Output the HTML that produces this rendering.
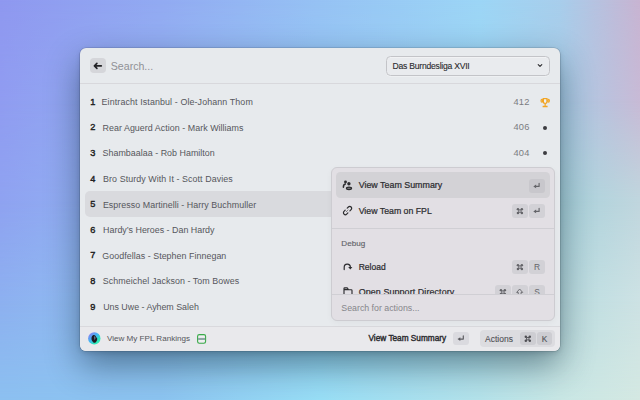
<!DOCTYPE html><html><head><meta charset="utf-8"><style>
*{margin:0;padding:0}
html,body{width:640px;height:400px;overflow:hidden}
body{position:relative;font-family:"Liberation Sans",sans-serif}
.bg0{position:absolute;left:0;top:0;width:640px;height:400px;background:linear-gradient(90deg,rgb(143, 152, 240) 0.00%,rgb(146, 170, 242) 25.00%,rgb(150, 194, 244) 50.00%,rgb(156, 214, 246) 75.00%,rgb(168, 206, 236) 87.50%,rgb(200, 180, 210) 100.00%);}
.bg1{position:absolute;left:0;top:0;width:640px;height:400px;background:linear-gradient(90deg,rgb(144, 156, 241) 0.00%,rgb(147, 178, 242) 25.00%,rgb(150, 200, 245) 50.00%,rgb(158, 212, 242) 75.00%,rgb(168, 204, 230) 87.50%,rgb(200, 186, 214) 100.00%);-webkit-mask-image:linear-gradient(180deg,transparent 0.0%,#000 25.0%,#000 100%);mask-image:linear-gradient(180deg,transparent 0.0%,#000 25.0%,#000 100%);}
.bg2{position:absolute;left:0;top:0;width:640px;height:400px;background:linear-gradient(90deg,rgb(143, 162, 241) 0.00%,rgb(147, 186, 243) 25.00%,rgb(150, 206, 245) 50.00%,rgb(160, 212, 230) 75.00%,rgb(168, 210, 220) 87.50%,rgb(192, 214, 222) 100.00%);-webkit-mask-image:linear-gradient(180deg,transparent 25.0%,#000 50.0%,#000 100%);mask-image:linear-gradient(180deg,transparent 25.0%,#000 50.0%,#000 100%);}
.bg3{position:absolute;left:0;top:0;width:640px;height:400px;background:linear-gradient(90deg,rgb(141, 176, 240) 0.00%,rgb(145, 196, 242) 25.00%,rgb(152, 214, 246) 50.00%,rgb(170, 220, 232) 75.00%,rgb(185, 220, 224) 87.50%,rgb(205, 226, 228) 100.00%);-webkit-mask-image:linear-gradient(180deg,transparent 50.0%,#000 75.0%,#000 100%);mask-image:linear-gradient(180deg,transparent 50.0%,#000 75.0%,#000 100%);}
.bg4{position:absolute;left:0;top:0;width:640px;height:400px;background:linear-gradient(90deg,rgb(140, 192, 240) 0.00%,rgb(140, 196, 240) 25.00%,rgb(152, 222, 246) 50.00%,rgb(180, 226, 234) 75.00%,rgb(200, 230, 228) 87.50%,rgb(212, 232, 226) 100.00%);-webkit-mask-image:linear-gradient(180deg,transparent 75.0%,#000 100.0%,#000 100%);mask-image:linear-gradient(180deg,transparent 75.0%,#000 100.0%,#000 100%);}

.b{position:absolute}
svg.b{overflow:visible}
.t{position:absolute;white-space:nowrap;line-height:1}
</style></head><body>
<div class="bg0"></div><div class="bg1"></div><div class="bg2"></div><div class="bg3"></div><div class="bg4"></div><div class="b" style="left:80px;top:48px;width:480.00px;height:302.50px;background:#e7eaed;border-radius:6px;box-shadow:0 14px 34px rgba(0,25,40,0.45), 0 2px 5px rgba(0,20,40,0.15), 0 0 0 0.6px rgba(0,0,0,0.18);"></div>
<div class="b" style="left:80px;top:83px;width:480.00px;height:1.00px;background:#d8d8dc;border-radius:0px;"></div>
<div class="b" style="left:90.2px;top:58.2px;width:15.50px;height:15.00px;background:#d5d6da;border-radius:4px;"></div>
<svg class="b" style="left:90.2px;top:58.2px" width="15.5" height="15" viewBox="0 0 15.5 15"><path d="M4.6 7.9 H11.3 M6.9 5.45 L4.4 7.9 L6.9 10.35" stroke="#232326" stroke-width="1.65" fill="none" stroke-linecap="round" stroke-linejoin="round"/></svg>
<span class="t" style="left:110.80px;top:61.23px;font-size:10.6px;color:#909196;font-weight:400;">Search...</span>
<div class="b" style="left:386.0px;top:55.5px;width:163.90px;height:20.30px;background:#e9ebee;border-radius:4.5px;box-sizing:border-box;border:1px solid #c3c4c8;box-shadow:inset 0 0.6px 0 rgba(255,255,255,0.7), 0 0.6px 0 rgba(255,255,255,0.6);"></div>
<span class="t" style="left:392.60px;top:61.72px;font-size:8.6px;color:#2a2a2d;font-weight:400;-webkit-text-stroke:0.1px #2a2a2d;letter-spacing:-0.24px;">Das Burndesliga XVII</span>
<svg class="b" style="left:536px;top:62px" width="8" height="7" viewBox="0 0 8 7"><path d="M2.2 2.6 L4 4.4 L5.8 2.6" stroke="#2a2a2d" stroke-width="1.1" fill="none" stroke-linecap="round" stroke-linejoin="round"/></svg>
<div class="b" style="left:85px;top:191.4px;width:470.00px;height:25.60px;background:#d9dade;border-radius:5px;"></div>
<span class="t" style="left:90.2px;top:97.86px;font-size:9.2px;color:#1e1e21;-webkit-text-stroke:0.4px #1e1e21">1</span>
<span class="t" style="left:101.60px;top:98.22px;font-size:8.9px;color:#56575c;letter-spacing:0.111px">Eintracht Istanbul - Ole-Johann Thom</span>
<span class="t" style="right:110.50px;top:97.78px;font-size:9.3px;color:#7b7c81;font-weight:400;letter-spacing:0.15px;">412</span>
<svg class="b" style="left:539.7px;top:97.55px" width="11" height="10" viewBox="0 0 11 10"><g fill="#f2a524"><ellipse cx="1.9" cy="2.75" rx="1.45" ry="1.95"/><ellipse cx="8.5" cy="2.75" rx="1.45" ry="1.95"/><rect x="2.6" y="7.7" width="5.0" height="1.5" rx="0.3"/><rect x="4.5" y="5.6" width="1.3" height="2.3"/><path d="M2.6 0.1 H7.6 V3.6 A2.5 2.5 0 0 1 2.6 3.6 Z"/></g><path d="M4.0 1.2 H6.3 V3.6 A1.15 1.3 0 0 1 4.0 3.6 Z" fill="#eef0f2"/><circle cx="1.7" cy="2.9" r="0.45" fill="#d8ecec"/><circle cx="8.7" cy="2.9" r="0.45" fill="#d8ecec"/></svg>
<span class="t" style="left:90.2px;top:123.46px;font-size:9.2px;color:#1e1e21;-webkit-text-stroke:0.4px #1e1e21">2</span>
<span class="t" style="left:102.50px;top:123.82px;font-size:8.9px;color:#56575c;letter-spacing:0.042px">Rear Aguerd Action - Mark Williams</span>
<span class="t" style="right:110.50px;top:123.38px;font-size:9.3px;color:#7b7c81;font-weight:400;letter-spacing:0.15px;">406</span>
<div class="b" style="left:542.6px;top:125.55px;width:4.10px;height:4.10px;background:#3c3c40;border-radius:2.1px;"></div>
<span class="t" style="left:90.2px;top:149.06px;font-size:9.2px;color:#1e1e21;-webkit-text-stroke:0.4px #1e1e21">3</span>
<span class="t" style="left:102.50px;top:149.42px;font-size:8.9px;color:#56575c;letter-spacing:0.031px">Shambaalaa - Rob Hamilton</span>
<span class="t" style="right:110.50px;top:148.98px;font-size:9.3px;color:#7b7c81;font-weight:400;letter-spacing:0.15px;">404</span>
<div class="b" style="left:542.6px;top:151.15px;width:4.10px;height:4.10px;background:#3c3c40;border-radius:2.1px;"></div>
<span class="t" style="left:90.2px;top:174.66px;font-size:9.2px;color:#1e1e21;-webkit-text-stroke:0.4px #1e1e21">4</span>
<span class="t" style="left:103.10px;top:175.02px;font-size:8.9px;color:#56575c;letter-spacing:0.072px">Bro Sturdy With It - Scott Davies</span>
<span class="t" style="left:90.2px;top:200.26px;font-size:9.2px;color:#1e1e21;-webkit-text-stroke:0.4px #1e1e21">5</span>
<span class="t" style="left:102.90px;top:200.62px;font-size:8.9px;color:#56575c;letter-spacing:0.051px">Espresso Martinelli - Harry Buchmuller</span>
<span class="t" style="left:90.2px;top:225.86px;font-size:9.2px;color:#1e1e21;-webkit-text-stroke:0.4px #1e1e21">6</span>
<span class="t" style="left:103.10px;top:226.22px;font-size:8.9px;color:#56575c;letter-spacing:0.004px">Hardy’s Heroes - Dan Hardy</span>
<span class="t" style="left:90.2px;top:251.46px;font-size:9.2px;color:#1e1e21;-webkit-text-stroke:0.4px #1e1e21">7</span>
<span class="t" style="left:102.35px;top:251.82px;font-size:8.9px;color:#56575c;letter-spacing:0.039px">Goodfellas - Stephen Finnegan</span>
<span class="t" style="left:90.2px;top:277.06px;font-size:9.2px;color:#1e1e21;-webkit-text-stroke:0.4px #1e1e21">8</span>
<span class="t" style="left:102.85px;top:277.42px;font-size:8.9px;color:#56575c;letter-spacing:0.066px">Schmeichel Jackson - Tom Bowes</span>
<span class="t" style="left:90.2px;top:302.66px;font-size:9.2px;color:#1e1e21;-webkit-text-stroke:0.4px #1e1e21">9</span>
<span class="t" style="left:103.20px;top:303.02px;font-size:8.9px;color:#56575c;letter-spacing:-0.020px">Uns Uwe - Ayhem Saleh</span>
<div class="b" style="left:80px;top:326px;width:480.00px;height:1.00px;background:#d9d9dd;border-radius:0px;"></div>
<div class="b" style="left:80px;top:327px;width:480.00px;height:23.50px;background:#e9e9ec;border-radius:0px;border-radius:0 0 6px 6px;"></div>
<svg class="b" style="left:87.8px;top:332px" width="12.6" height="12.8" viewBox="0 0 12.6 12.8"><defs><linearGradient id="lg" x1="0.1" y1="0.1" x2="0.85" y2="0.9"><stop offset="0" stop-color="#8a7ef2"/><stop offset="0.45" stop-color="#3fb6f2"/><stop offset="0.8" stop-color="#2ce8b8"/><stop offset="1" stop-color="#36f0c0"/></linearGradient></defs><circle cx="6.3" cy="6.4" r="6.2" fill="url(#lg)"/><path d="M5.4 3.0 C6.6 2.6 7.6 3.4 7.8 4.6 L9.2 6.6 C9.4 8 8.6 9.4 7.8 10.2 C7 10.9 5.8 10.9 5.2 10.2 C4 9.2 3.3 7.6 3.5 6.0 C3.7 4.6 4.4 3.4 5.4 3.0 Z" fill="#1e1a22"/><path d="M6.2 4.2 C7.0 4.4 7.5 5.2 7.4 6.2 C7.3 7.0 6.9 7.6 6.5 7.9 C6.6 6.8 6.4 5.4 6.2 4.2 Z" fill="#7fa6c4"/></svg>
<span class="t" style="left:106.90px;top:335.04px;font-size:8.1px;color:#55565b;font-weight:400;">View My FPL Rankings</span>
<svg class="b" style="left:197.4px;top:333.6px" width="9.2" height="9.8" viewBox="0 0 9.2 9.8"><rect x="0.6" y="0.6" width="8.0" height="8.6" rx="1.7" stroke="#3aab4a" stroke-width="1.1" fill="none"/><path d="M1.1 5.0 H8.1" stroke="#6f918c" stroke-width="1.5"/><path d="M2.2 6.9 H7.0" stroke="#f6f6f6" stroke-width="0.9"/><path d="M2.2 2.6 H7.0" stroke="#f2f2f4" stroke-width="0.9"/></svg>
<span class="t" style="left:368.50px;top:334.72px;font-size:8.25px;color:#2a2a2d;font-weight:400;-webkit-text-stroke:0.38px #2a2a2d;">View Team Summary</span>
<div class="b" style="left:453.1px;top:331.75px;width:15.65px;height:13.45px;background:#dadadf;border-radius:3px;"></div>
<svg class="b" style="left:453.1px;top:331.75px" width="15.65" height="13.45" viewBox="0 0 15.65 13.45"><g transform="translate(0,0)"><path d="M10.3 3.9 V7.1 H6.6" stroke="#5a5a5f" stroke-width="1.15" fill="none" stroke-linejoin="round" stroke-linecap="round"/><path d="M4.5 7.1 L7.3 5.2 V9.0 Z" fill="#5a5a5f"/></g></svg>
<div class="b" style="left:480.3px;top:329.9px;width:74.50px;height:16.80px;background:#dcdce0;border-radius:4px;"></div>
<span class="t" style="left:485.10px;top:334.70px;font-size:8.5px;color:#505156;font-weight:400;-webkit-text-stroke:0.1px #505156;">Actions</span>
<div class="b" style="left:520.0px;top:331.75px;width:15.60px;height:13.45px;background:#cdcdd2;border-radius:3px;"></div>
<div class="b" style="left:537.2px;top:331.75px;width:15.00px;height:13.45px;background:#cdcdd2;border-radius:3px;"></div>
<svg class="b" style="left:520px;top:331.75px" width="15.6" height="13.45" viewBox="0 0 15.6 13.45"><g transform="translate(4.50,3.40) scale(1.000)" stroke="#4e4e53" stroke-width="1.15" fill="none" stroke-linejoin="round"><rect x="2.1" y="2.1" width="2.4" height="2.4" stroke-width="0.9"/><g fill="#4e4e53" stroke="none"><circle cx="1.3" cy="1.3" r="1.25"/><circle cx="5.3" cy="1.3" r="1.25"/><circle cx="1.3" cy="5.3" r="1.25"/><circle cx="5.3" cy="5.3" r="1.25"/></g></g></svg>
<span class="t" style="left:541.70px;top:334.77px;font-size:8.3px;color:#555559;font-weight:400;-webkit-text-stroke:0.12px #555559;">K</span>
<div class="b" style="left:331.2px;top:167.2px;width:224.00px;height:153.70px;background:#e2dfe4;border-radius:6px;box-sizing:border-box;border:1px solid #cdccd1;box-shadow:0 2px 6px rgba(0,0,0,0.04);"></div>
<div class="b" style="left:336px;top:172.2px;width:213.50px;height:25.40px;background:#d3d2d6;border-radius:4.5px;"></div>
<span class="t" style="left:358.70px;top:181.07px;font-size:8.9px;color:#2c2c2f;font-weight:400;-webkit-text-stroke:0.22px #2c2c2f;">View Team Summary</span>
<span class="t" style="left:358.70px;top:206.89px;font-size:8.75px;color:#2c2c2f;font-weight:400;-webkit-text-stroke:0.22px #2c2c2f;">View Team on FPL</span>
<div class="b" style="left:529.4px;top:178.5px;width:15.30px;height:14.00px;background:#c8c7cc;border-radius:3px;"></div>
<svg class="b" style="left:529.4px;top:178.5px" width="15.3" height="14" viewBox="0 0 15.3 14"><g transform="translate(-0.2,0.3)"><path d="M10.3 3.9 V7.1 H6.6" stroke="#646469" stroke-width="1.15" fill="none" stroke-linejoin="round" stroke-linecap="round"/><path d="M4.5 7.1 L7.3 5.2 V9.0 Z" fill="#646469"/></g></svg>
<div class="b" style="left:529.4px;top:204.1px;width:15.30px;height:14.00px;background:#d2d1d6;border-radius:3px;"></div>
<svg class="b" style="left:529.4px;top:204.1px" width="15.3" height="14" viewBox="0 0 15.3 14"><g transform="translate(-0.2,0.3)"><path d="M10.3 3.9 V7.1 H6.6" stroke="#646469" stroke-width="1.15" fill="none" stroke-linejoin="round" stroke-linecap="round"/><path d="M4.5 7.1 L7.3 5.2 V9.0 Z" fill="#646469"/></g></svg>
<div class="b" style="left:512.4px;top:204.1px;width:15.30px;height:14.00px;background:#d2d1d6;border-radius:3px;"></div>
<svg class="b" style="left:512.4px;top:204.1px" width="15.3" height="14" viewBox="0 0 15.3 14"><g transform="translate(4.65,3.85) scale(0.985)" stroke="#646469" stroke-width="1.0" fill="none" stroke-linejoin="round"><rect x="2.1" y="2.1" width="2.4" height="2.4" stroke-width="0.9"/><g fill="#646469" stroke="none"><circle cx="1.3" cy="1.3" r="1.25"/><circle cx="5.3" cy="1.3" r="1.25"/><circle cx="1.3" cy="5.3" r="1.25"/><circle cx="5.3" cy="5.3" r="1.25"/></g></g></svg>
<div class="b" style="left:529.4px;top:259.7px;width:15.30px;height:14.00px;background:#d2d1d6;border-radius:3px;"></div>
<span class="t" style="left:529.4px;width:15.3px;text-align:center;top:262.69px;font-size:8.4px;color:#646469">R</span>
<div class="b" style="left:512.4px;top:259.7px;width:15.30px;height:14.00px;background:#d2d1d6;border-radius:3px;"></div>
<svg class="b" style="left:512.4px;top:259.7px" width="15.3" height="14" viewBox="0 0 15.3 14"><g transform="translate(4.65,3.85) scale(0.985)" stroke="#646469" stroke-width="1.0" fill="none" stroke-linejoin="round"><rect x="2.1" y="2.1" width="2.4" height="2.4" stroke-width="0.9"/><g fill="#646469" stroke="none"><circle cx="1.3" cy="1.3" r="1.25"/><circle cx="5.3" cy="1.3" r="1.25"/><circle cx="1.3" cy="5.3" r="1.25"/><circle cx="5.3" cy="5.3" r="1.25"/></g></g></svg>
<div class="b" style="left:332.2px;top:227.6px;width:222.00px;height:1.00px;background:#d0cfd4;border-radius:0px;"></div>
<span class="t" style="left:341.30px;top:240.34px;font-size:8.1px;color:#636469;font-weight:400;-webkit-text-stroke:0.15px #636469;">Debug</span>
<span class="t" style="left:358.70px;top:262.50px;font-size:8.5px;color:#2c2c2f;font-weight:400;-webkit-text-stroke:0.22px #2c2c2f;">Reload</span>
<div class="b" style="left:0;top:0;width:640px;height:294.4px;overflow:hidden"><span class="t" style="left:358.70px;top:287.67px;font-size:8.9px;color:#2c2c2f;font-weight:400;-webkit-text-stroke:0.22px #2c2c2f;letter-spacing:0.11px;">Open Support Directory</span>
<svg class="b" style="left:342.6px;top:286.5px" width="10" height="10" viewBox="0 0 10 10"><path d="M1.0 9.5 V1.6 Q1.0 0.9 1.7 0.9 H3.9 Q4.4 0.9 4.7 1.4 L5.4 2.7 H8.3 Q9.0 2.7 9.0 3.4 V9.5 M1.0 2.6 H5.0" stroke="#2c2c2f" stroke-width="1.15" fill="none" stroke-linejoin="round"/></svg><div class="b" style="left:529.4px;top:285.3px;width:15.30px;height:14.00px;background:#d2d1d6;border-radius:3px;"></div>
<span class="t" style="left:529.4px;width:15.3px;text-align:center;top:288.29px;font-size:8.4px;color:#646469">S</span>
<div class="b" style="left:512.4px;top:285.3px;width:15.30px;height:14.00px;background:#d2d1d6;border-radius:3px;"></div>
<svg class="b" style="left:512.4px;top:285.3px" width="15.3" height="14" viewBox="0 0 15.3 14"><path d="M7.65 4.0 L10.65 7.4 H9.05 V10.2 H6.25 V7.4 H4.65 Z" stroke="#646469" stroke-width="0.9" fill="none" stroke-linejoin="round"/></svg>
<div class="b" style="left:495.4px;top:285.3px;width:15.30px;height:14.00px;background:#d2d1d6;border-radius:3px;"></div>
<svg class="b" style="left:495.4px;top:285.3px" width="15.3" height="14" viewBox="0 0 15.3 14"><g transform="translate(4.65,3.85) scale(0.985)" stroke="#646469" stroke-width="1.0" fill="none" stroke-linejoin="round"><rect x="2.1" y="2.1" width="2.4" height="2.4" stroke-width="0.9"/><g fill="#646469" stroke="none"><circle cx="1.3" cy="1.3" r="1.25"/><circle cx="5.3" cy="1.3" r="1.25"/><circle cx="1.3" cy="5.3" r="1.25"/><circle cx="5.3" cy="5.3" r="1.25"/></g></g></svg>
</div>
<div class="b" style="left:332.2px;top:294.0px;width:222.00px;height:1.00px;background:#d0cfd4;border-radius:0px;"></div>
<span class="t" style="left:341.30px;top:304.15px;font-size:8.8px;color:#86868b;font-weight:400;">Search for actions...</span>
<svg class="b" style="left:342px;top:178.5px" width="11" height="12" viewBox="0 0 11 12"><circle cx="3.5" cy="3.0" r="1.45" fill="#2c2c2f"/><path d="M3.4 5.0 C2.0 5.3 1.3 6.5 1.4 8.3" stroke="#2c2c2f" stroke-width="1.5" fill="none" stroke-linecap="round"/><circle cx="6.9" cy="4.8" r="2.3" fill="#d3d2d6"/><circle cx="6.9" cy="4.8" r="1.7" fill="#2c2c2f"/><ellipse cx="7.0" cy="9.3" rx="2.55" ry="1.25" stroke="#2c2c2f" stroke-width="1.25" fill="#77777b"/></svg>
<svg class="b" style="left:342px;top:205px" width="11" height="11" viewBox="0 0 11 11"><path d="M5.2 3.2 L6.4 2 A1.9 1.9 0 0 1 9.1 4.7 L7.9 5.9 M5.9 7.9 L4.7 9.1 A1.9 1.9 0 0 1 2 6.4 L3.2 5.2" stroke="#2c2c2f" stroke-width="1.2" fill="none" stroke-linecap="round"/><path d="M4.3 6.7 L6.7 4.3" stroke="#2c2c2f" stroke-width="0.9" stroke-dasharray="0.9 0.7"/></svg>
<svg class="b" style="left:342px;top:262px" width="11" height="9" viewBox="0 0 11 9"><path d="M2.2 7.6 V5.4 A3.1 3.1 0 0 1 8.4 5.2" stroke="#2c2c2f" stroke-width="1.2" fill="none" stroke-linecap="round"/><path d="M6.2 5.0 H10.4 L8.3 7.4 Z" fill="#2c2c2f"/></svg>
</body></html>
